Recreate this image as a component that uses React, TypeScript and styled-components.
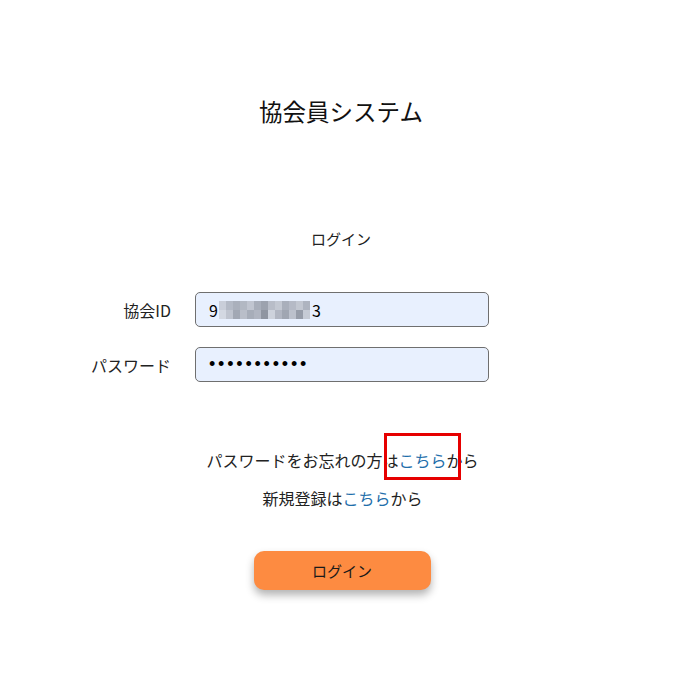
import React from "react";
import styled, { createGlobalStyle } from "styled-components";

const GlobalStyle = createGlobalStyle`
  body {
    margin: 0;
    background: #ffffff;
    font-family: "Noto Sans CJK JP", "Liberation Sans", sans-serif;
    color: #222222;
  }
`;

const Page = styled.div`
  width: 682px;
  min-height: 676px;
  padding-top: 94px;
  box-sizing: border-box;
`;

const Title = styled.h1`
  margin: 0;
  text-align: center;
  font-size: 23.5px;
  font-weight: 400;
  line-height: 34px;
  color: #111111;
`;

const Heading = styled.h2`
  margin: 99px 0 0;
  text-align: center;
  font-size: 15px;
  font-weight: 400;
  line-height: 24px;
`;

const FormGrid = styled.div`
  display: grid;
  grid-template-columns: 171px 294px;
  column-gap: 24px;
  row-gap: 20px;
  margin-top: 41px;
  align-items: center;
`;

const Label = styled.label`
  text-align: right;
  font-size: 16px;
  line-height: 24px;
`;

const Field = styled.div`
  height: 35px;
  box-sizing: border-box;
  border: 1px solid #6f6f6f;
  border-radius: 5px;
  background: #e8f0fe;
  padding: 0 13px;
  display: flex;
  align-items: center;
  font-size: 16px;
  color: #000000;
`;

const Dots = styled.span`
  font-family: "Liberation Sans", sans-serif;
  font-size: 18px;
  letter-spacing: 2.8px;
`;

const Mosaic = styled.span`
  display: inline-grid;
  grid-template-columns: repeat(13, 7px);
  grid-auto-rows: 9px;
  margin: 0 2px 0 1px;
`;

const Cell = styled.span<{ $c: string }>`
  background: ${(p) => p.$c};
`;

const LinkLine = styled.p<{ $top: number }>`
  margin: ${(p) => p.$top}px 0 0;
  padding-left: 3px;
  text-align: center;
  font-size: 16px;
  line-height: 24px;
`;

const Link = styled.a`
  color: #1f6fab;
  text-decoration: none;
  position: relative;
`;

const Highlight = styled.span`
  position: absolute;
  left: -14px;
  right: -14px;
  top: -15px;
  bottom: -8px;
  border: 3px solid #e60000;
`;

const ButtonRow = styled.div`
  display: flex;
  justify-content: center;
  margin-top: 41px;
`;

const LoginButton = styled.button`
  width: 177px;
  height: 39px;
  margin-left: 2px;
  border: none;
  border-radius: 10px;
  background: #fd8b41;
  box-shadow: 0 5px 8px rgba(0, 0, 0, 0.3);
  font-family: inherit;
  font-size: 15px;
  color: #1a1a1a;
  cursor: pointer;
`;

const mosaic = [
  "#c9ced9", "#b4bac6", "#aab0bc", "#b2b8c3", "#c0c5d0", "#a8aeba", "#9ca2ae", "#b8bdc8", "#c3c8d2", "#a9afbb", "#b5bac6", "#c2c7d1", "#aeb4c0",
  "#d3d8e2", "#bfc4cf", "#a2a8b4", "#b9bec9", "#a7adb9", "#b0b5c1", "#8f95a1", "#cdd2dc", "#b1b6c2", "#a0a6b2", "#bcc1cc", "#979da9", "#c6cbd5",
];

export default function App() {
  return (
    <Page>
      <GlobalStyle />
      <Title>協会員システム</Title>
      <Heading>ログイン</Heading>
      <FormGrid>
        <Label>協会ID</Label>
        <Field>
          9
          <Mosaic>
            {mosaic.map((c, i) => (
              <Cell key={i} $c={c} />
            ))}
          </Mosaic>
          3
        </Field>
        <Label>パスワード</Label>
        <Field>
          <Dots>•••••••••••</Dots>
        </Field>
      </FormGrid>
      <LinkLine $top={66}>
        パスワードをお忘れの方は
        <Link>
          こちら
          <Highlight />
        </Link>
        から
      </LinkLine>
      <LinkLine $top={14}>
        新規登録は<Link>こちら</Link>から
      </LinkLine>
      <ButtonRow>
        <LoginButton>ログイン</LoginButton>
      </ButtonRow>
    </Page>
  );
}
